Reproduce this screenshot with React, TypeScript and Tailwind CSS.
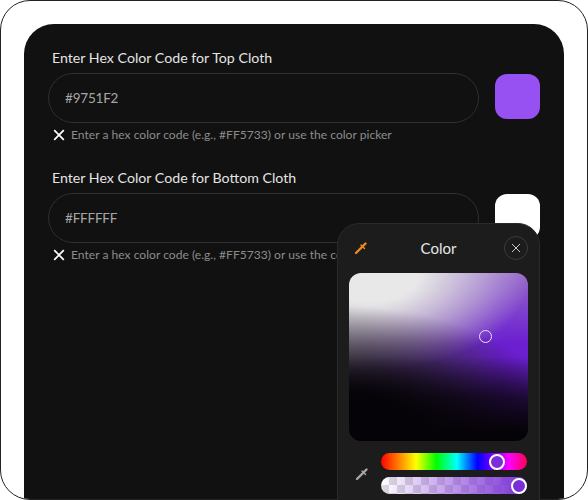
import React from "react";

function Dropper({ className }: { className: string }) {
  return (
    <svg viewBox="0 0 14 14" className={className} fill="none" stroke="currentColor" strokeLinecap="round">
      <path d="M2 12 L8 6" strokeWidth="2.4" />
      <path d="M7 4 L10.5 7.5" strokeWidth="1.4" />
      <path d="M9 5 L11.5 2.5" strokeWidth="2.4" />
    </svg>
  );
}

function Field({ label, value, swatch }: { label: string; value: string; swatch: string }) {
  return (
    <div className="flex flex-col">
      <div className="ml-[28px] text-[14.2px] leading-[20px] text-[#e4e4e4]">{label}</div>
      <div className="mt-[5px] ml-[24px] flex items-start gap-[16px]">
        <div className="flex h-[50px] w-[431px] items-center rounded-[25px] border border-[#303030] pl-[16px] text-[13.5px] tracking-[-0.2px] text-[#a6a6a6]">
          {value}
        </div>
        <div className={`mt-[1px] h-[45px] w-[45px] rounded-[12px] ${swatch}`} />
      </div>
      <div className="mt-[3px] ml-[29px] flex items-center gap-[6px] text-[12.1px] leading-[18px] text-[#8c8c8c]">
        <svg viewBox="0 0 12 12" className="h-[12px] w-[12px] text-white" fill="none" stroke="currentColor" strokeWidth="1.7">
          <path d="M1.2 1.2 L10.8 10.8 M10.8 1.2 L1.2 10.8" />
        </svg>
        <span className="whitespace-nowrap">Enter a hex color code (e.g., #FF5733) or use the color picker</span>
      </div>
    </div>
  );
}

export default function App() {
  return (
    <div className="relative h-[500px] w-[588px] overflow-hidden bg-white font-['Lato','Open_Sans',sans-serif]">
      <div className="h-[500px] w-[588px] overflow-hidden rounded-[30px] border border-[#222222] bg-white px-[23px] pt-[23px]">
        <div className="flex h-[520px] w-[540px] flex-col gap-[24px] rounded-t-[30px] bg-[#111111] pt-[24px]">
          <Field label="Enter Hex Color Code for Top Cloth" value="#9751F2" swatch="bg-[#9751f2]" />
          <Field label="Enter Hex Color Code for Bottom Cloth" value="#FFFFFF" swatch="bg-white" />
        </div>
      </div>

      <div className="absolute left-[337px] top-[223px] h-[300px] w-[203px] rounded-[22px] border border-[#2a2a2a] bg-[#1c1c1c] px-[11px]">
        <div className="mb-[1px] flex h-[48px] items-center justify-between">
          <Dropper className="ml-[5px] h-[14px] w-[14px] text-[#f08a24]" />
          <span className="ml-[5px] text-[15px] text-[#e6e6e6]">Color</span>
          <div className="flex h-[24px] w-[24px] items-center justify-center rounded-full border border-[#3c3c3c]">
            <svg viewBox="0 0 10 10" className="h-[10px] w-[10px] text-[#c8c8c8]" fill="none" stroke="currentColor" strokeWidth="1">
              <path d="M1 1 L9 9 M9 1 L1 9" />
            </svg>
          </div>
        </div>
        <div className="relative h-[168px] w-[179px] overflow-hidden rounded-[12px] bg-[radial-gradient(ellipse_125%_80%_at_0%_100%,#060308_35%,rgba(6,3,8,0)_100%),linear-gradient(to_bottom,rgba(6,3,8,0)_50%,rgba(6,3,8,0.7)_74%,#060308_94%),radial-gradient(ellipse_90%_58%_at_12%_0%,#e8e8e8_30%,rgba(232,232,232,0)_100%),linear-gradient(to_bottom,rgba(175,150,195,0.6),rgba(175,150,195,0)_42%),linear-gradient(to_right,#7c6c8a,#6b1fd0_85%)]">
          <div className="absolute left-[130px] top-[57px] h-[13px] w-[13px] rounded-full border border-[#f0e0ff]" />
        </div>
        <div className="mt-[12px] flex items-start gap-[12px]">
          <Dropper className="mt-[14px] ml-[6px] h-[14px] w-[14px] text-[#a8a8a8]" />
          <div className="flex w-[146px] flex-col gap-[7px]">
            <div className="relative h-[17px] rounded-full bg-[linear-gradient(to_right,#ff0000,#ffff00_24%,#00ff00_38%,#00ffff_52%,#0000ff_66%,#ff00ff_88%,#ff0050)]">
              <div className="absolute left-[108px] top-[0.5px] h-[16px] w-[16px] rounded-full border-2 border-white bg-[#7a2fd6]" />
            </div>
            <div className="relative h-[17px] rounded-full bg-[linear-gradient(to_right,rgba(122,47,214,0),#7a2fd6),repeating-conic-gradient(#dcdcdc_0_25%,#ffffff_0_50%)] [background-size:100%_100%,16px_16px]">
              <div className="absolute right-0 top-[0.5px] h-[16px] w-[16px] rounded-full border-2 border-white bg-[#7a2fd6]" />
            </div>
          </div>
        </div>
      </div>
    </div>
  );
}
